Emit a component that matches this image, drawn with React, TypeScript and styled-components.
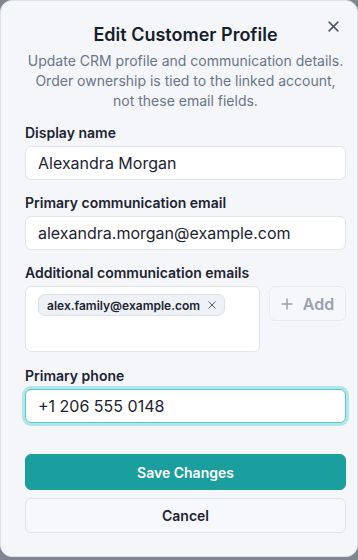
import React from "react";
import styled, { createGlobalStyle } from "styled-components";

const Global = createGlobalStyle`
  html, body { margin: 0; padding: 0; background: #80858f; }
  body { font-family: Inter, "Noto Sans", sans-serif; }
  * { box-sizing: border-box; }
`;

const Dialog = styled.div`
  position: relative;
  width: 358px;
  height: 557px;
  background: #f5f6fa;
  border: 1px solid #dde2ea;
  border-radius: 12px;
  padding: 20px 11px 0 24px;
  display: flex;
  flex-direction: column;
`;

const Close = styled.button`
  position: absolute;
  top: 17px;
  right: 16px;
  width: 16px;
  height: 16px;
  padding: 0;
  border: none;
  background: transparent;
  display: flex;
  align-items: center;
  justify-content: center;
  color: #4b5563;
`;

const Title = styled.h2`
  margin: 0;
  font-size: 18px;
  line-height: 28px;
  font-weight: 600;
  color: #161d2b;
  text-align: center;
`;

const Description = styled.p`
  margin: 2px 0 0;
  font-size: 14px;
  line-height: 20px;
  color: #687589;
  text-align: center;
`;

const Form = styled.div`
  margin-top: 12px;
  display: flex;
  flex-direction: column;
  gap: 13px;
`;

const Field = styled.div<{ $spaceAfter?: number }>`
  display: flex;
  flex-direction: column;
  gap: 3px;
  margin-bottom: ${(p) => p.$spaceAfter ?? 0}px;
`;

const Label = styled.label`
  font-size: 14px;
  line-height: 20px;
  font-weight: 600;
  color: #1c2331;
`;

const Input = styled.div<{ $focused?: boolean }>`
  height: 34px;
  display: flex;
  align-items: center;
  padding: 0 12px;
  background: #ffffff;
  border: 1px solid ${(p) => (p.$focused ? "#56c7c9" : "#e1e5ec")};
  border-radius: 6px;
  font-size: 16px;
  color: #1c2331;
  box-shadow: ${(p) => (p.$focused ? "0 0 0 3px #b3e7e7" : "none")};
`;

const EmailsRow = styled.div`
  display: flex;
  gap: 9px;
  align-items: flex-start;
`;

const TagBox = styled.div`
  flex: 0 0 235px;
  height: 66px;
  background: #ffffff;
  border: 1px solid #e1e5ec;
  border-radius: 6px;
  padding: 7px 12px;
  display: flex;
  flex-wrap: wrap;
  align-content: flex-start;
`;

const Chip = styled.span`
  height: 22px;
  display: inline-flex;
  align-items: center;
  gap: 8px;
  padding: 0 8px;
  background: #eef1f6;
  border: 1px solid #dbe1ea;
  border-radius: 7px;
  font-size: 12px;
  font-weight: 600;
  color: #1c2331;
`;

const ChipX = styled.span`
  display: inline-flex;
  color: #4b5563;
`;

const AddButton = styled.button`
  flex: 1;
  height: 35px;
  display: flex;
  align-items: center;
  justify-content: center;
  gap: 10px;
  background: #f6f7fa;
  border: 1px solid #e7eaf0;
  border-radius: 6px;
  font-family: Inter, sans-serif;
  font-size: 16px;
  font-weight: 600;
  color: #9aa1ad;
`;

const Actions = styled.div`
  margin-top: 31px;
  display: flex;
  flex-direction: column;
  gap: 8px;
`;

const Button = styled.button<{ $primary?: boolean }>`
  height: ${(p) => (p.$primary ? "36px" : "35px")};
  border-radius: 6px;
  border: 1px solid ${(p) => (p.$primary ? "#1a9e9e" : "#dfe3ea")};
  background: ${(p) => (p.$primary ? "#1a9e9e" : "#f7f8fb")};
  color: ${(p) => (p.$primary ? "#ffffff" : "#1c2331")};
  font-family: Inter, sans-serif;
  font-size: 14px;
  font-weight: 600;
`;

const XIcon = ({ size, stroke }: { size: number; stroke: number }) => (
  <svg width={size} height={size} viewBox="0 0 10 10" fill="none">
    <path d="M1 1L9 9M9 1L1 9" stroke="currentColor" strokeWidth={stroke} strokeLinecap="round" />
  </svg>
);

export default function App() {
  return (
    <>
      <Global />
      <Dialog>
        <Close aria-label="Close">
          <XIcon size={11} stroke={1.4} />
        </Close>
        <Title>Edit Customer Profile</Title>
        <Description>
          Update CRM profile and communication details. Order ownership is tied to the linked account, not these email fields.
        </Description>
        <Form>
          <Field>
            <Label>Display name</Label>
            <Input>Alexandra Morgan</Input>
          </Field>
          <Field>
            <Label>Primary communication email</Label>
            <Input>alexandra.morgan@example.com</Input>
          </Field>
          <Field $spaceAfter={1}>
            <Label>Additional communication emails</Label>
            <EmailsRow>
              <TagBox>
                <Chip>
                  alex.family@example.com
                  <ChipX>
                    <XIcon size={8} stroke={1.2} />
                  </ChipX>
                </Chip>
              </TagBox>
              <AddButton>
                <svg width="12" height="12" viewBox="0 0 12 12" fill="none">
                  <path d="M6 1V11M1 6H11" stroke="currentColor" strokeWidth="1.5" strokeLinecap="round" />
                </svg>
                Add
              </AddButton>
            </EmailsRow>
          </Field>
          <Field>
            <Label>Primary phone</Label>
            <Input $focused>+1 206 555 0148</Input>
          </Field>
        </Form>
        <Actions>
          <Button $primary>Save Changes</Button>
          <Button>Cancel</Button>
        </Actions>
      </Dialog>
    </>
  );
}
